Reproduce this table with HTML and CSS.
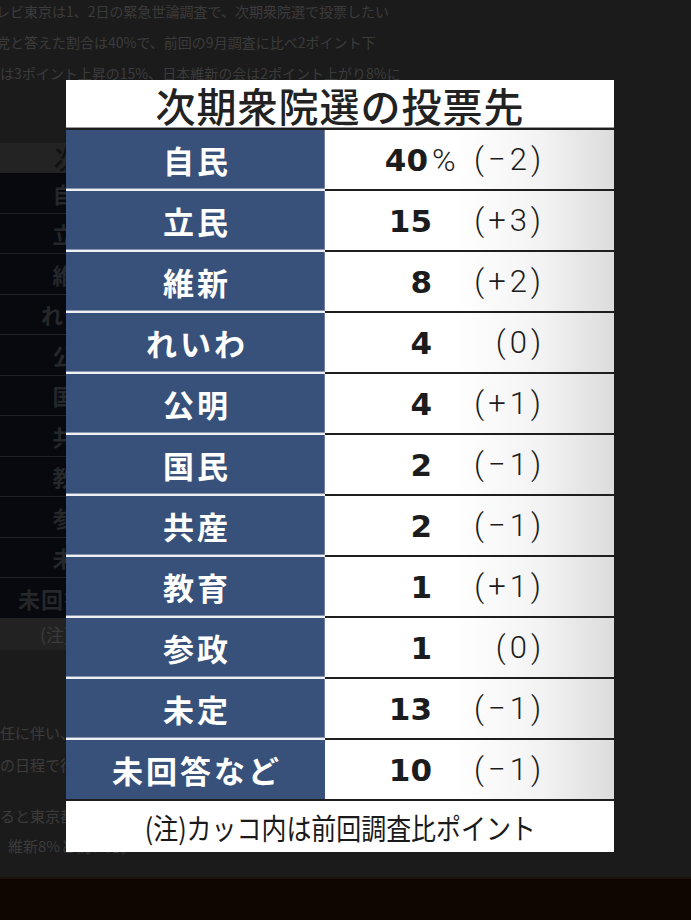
FILE: index.html
```html
<!DOCTYPE html>
<html lang="ja">
<head>
<meta charset="utf-8">
<title>次期衆院選の投票先</title>
<link rel="stylesheet" href="styles.css">
</head>
<body>
<div class="page">
  <div class="article">
    <div class="line">テレビ東京は1、2日の緊急世論調査で、次期衆院選で投票したい</div>
    <div class="line">政党と答えた割合は40%で、前回の9月調査に比べ2ポイント下</div>
    <div class="line indent">は3ポイント上昇の15%、日本維新の会は2ポイント上がり8%に</div>
  </div>

  <div class="bgtable">
    <div class="bg-head">次期衆院選の投票先</div>
    <div class="bg-row"><span>自民</span></div>
    <div class="bg-row"><span>立民</span></div>
    <div class="bg-row"><span>維新</span></div>
    <div class="bg-row"><span>れいわ</span></div>
    <div class="bg-row"><span>公明</span></div>
    <div class="bg-row"><span>国民</span></div>
    <div class="bg-row"><span>共産</span></div>
    <div class="bg-row"><span>教育</span></div>
    <div class="bg-row"><span>参政</span></div>
    <div class="bg-row"><span>未定</span></div>
    <div class="bg-row"><span>未回答など</span></div>
    <div class="bg-note">(注)カッコ内は前回調査比ポイント</div>
  </div>

  <div class="article lower">
    <div class="line">任に伴い、衆院選は10月27日投開票</div>
    <div class="line">の日程で行われる見通しだ。</div>
  </div>
  <div class="article lower2">
    <div class="line">ると東京都内の投票先は</div>
    <div class="line small-indent">維新8%と続いた。</div>
  </div>

  <div class="footer-bar"></div>
</div>

<div class="modal">
  <div class="m-title">次期衆院選の投票先</div>
  <div class="m-row"><div class="m-name">自民</div><div class="m-val"><span class="m-num">40<span class="m-pct">%</span></span><span class="m-delta">(−2)</span></div></div>
  <div class="m-row"><div class="m-name">立民</div><div class="m-val"><span class="m-num">15</span><span class="m-delta">(+3)</span></div></div>
  <div class="m-row"><div class="m-name">維新</div><div class="m-val"><span class="m-num">8</span><span class="m-delta">(+2)</span></div></div>
  <div class="m-row"><div class="m-name">れいわ</div><div class="m-val"><span class="m-num">4</span><span class="m-delta">(0)</span></div></div>
  <div class="m-row"><div class="m-name">公明</div><div class="m-val"><span class="m-num">4</span><span class="m-delta">(+1)</span></div></div>
  <div class="m-row"><div class="m-name">国民</div><div class="m-val"><span class="m-num">2</span><span class="m-delta">(−1)</span></div></div>
  <div class="m-row"><div class="m-name">共産</div><div class="m-val"><span class="m-num">2</span><span class="m-delta">(−1)</span></div></div>
  <div class="m-row"><div class="m-name">教育</div><div class="m-val"><span class="m-num">1</span><span class="m-delta">(+1)</span></div></div>
  <div class="m-row"><div class="m-name">参政</div><div class="m-val"><span class="m-num">1</span><span class="m-delta">(0)</span></div></div>
  <div class="m-row"><div class="m-name">未定</div><div class="m-val"><span class="m-num">13</span><span class="m-delta">(−1)</span></div></div>
  <div class="m-row last"><div class="m-name">未回答など</div><div class="m-val"><span class="m-num">10</span><span class="m-delta">(−1)</span></div></div>
  <div class="m-note"><span>(注)カッコ内は前回調査比ポイント</span></div>
</div>
</body>
</html>
```

FILE: styles.css
```css
html, body {
  margin: 0;
  padding: 0;
}
body {
  background: #1b1b1b;
  font-family: "Noto Sans CJK JP", "Noto Sans", sans-serif;
  overflow: hidden;
  width: 691px;
  height: 920px;
}
.page {
  height: 920px;
  display: flex;
  flex-direction: column;
  overflow: hidden;
}
.article {
  margin-left: -18px;
  margin-top: -4px;
  width: 420px;
  color: #3b3b3b;
  font-size: 14px;
  line-height: 31px;
  white-space: nowrap;
}
.article .indent {
  padding-left: 18px;
}
.article .small-indent {
  padding-left: 8px;
}

/* dimmed table behind the modal */
.bgtable {
  margin-top: 54px;
  margin-left: -10px;
  width: 362px;
  font-weight: 700;
}
.bg-head {
  height: 29px;
  background: #232323;
  color: #101010;
  font-size: 26px;
  line-height: 29px;
  text-align: center;
  font-weight: 500;
}
.bg-row {
  height: 39.5px;
  border-top: 1px solid #1f2023;
  background: #07090e;
  display: grid;
  grid-template-columns: 171px 1fr;
  align-items: center;
}
.bg-row span {
  text-align: center;
  color: #25272b;
  font-size: 22px;
  letter-spacing: 1px;
}
.bg-note {
  height: 32px;
  background: #222;
  color: #3a3a3a;
  font-size: 18px;
  font-weight: 400;
  line-height: 32px;
  padding-left: 50px;
}
.article.lower {
  margin-left: 0;
  margin-top: 67px;
  font-size: 15px;
  line-height: 32px;
}
.article.lower2 {
  margin-left: 0;
  margin-top: 20px;
  font-size: 15px;
  line-height: 30px;
}
.footer-bar {
  margin-top: auto;
  height: 41px;
  border-top: 2px solid #1e1308;
  background: #0f0600;
}

/* modal image */
.modal {
  position: absolute;
  left: 66px;
  top: 80px;
  width: 548px;
  background: #fff;
}
.m-title {
  height: 47px;
  border-bottom: 2px solid #1e1e1e;
  box-shadow: inset 0 -1px 0 #9a9a9a;
  display: flex;
  align-items: center;
  justify-content: center;
  font-size: 40px;
  font-weight: 500;
  letter-spacing: 1px;
  color: #222;
  line-height: 1;
  padding-top: 1px;
}
.m-row {
  display: grid;
  grid-template-columns: 259px 289px;
  height: 61px;
}
.m-name {
  background: #38517a;
  border-bottom: 2px solid #eef0f4;
  box-shadow: inset 0 -1px 0 #8896ad, inset -1px 0 0 #6f80a0;
  color: #fff;
  font-weight: 700;
  font-size: 31px;
  letter-spacing: 3px;
  padding-left: 3px;
  display: flex;
  align-items: center;
  justify-content: center;
}
.m-val {
  background: linear-gradient(to right, #ffffff 45%, #f3f3f3 75%, #dcdcdc 100%);
  border-bottom: 2px solid #1e1e1e;
  display: grid;
  grid-template-columns: 107px 109px;
  align-items: center;
}
.m-row.last .m-name {
  border-bottom-color: #1e1e1e;
  box-shadow: none;
}
.m-num {
  text-align: right;
  font-family: "DejaVu Sans", "Liberation Sans", sans-serif;
  font-weight: 700;
  font-size: 31px;
  color: #1c1c1c;
  white-space: nowrap;
}
.m-pct {
  display: inline-block;
  width: 0;
  overflow: visible;
  font-family: "Roboto", "Liberation Sans", sans-serif;
  font-weight: 300;
  font-size: 32px;
  padding-left: 4px;
}
.m-delta {
  text-align: right;
  font-family: "Roboto", "Liberation Sans", sans-serif;
  font-weight: 300;
  font-size: 31px;
  letter-spacing: 4px;
  margin-right: -4px;
  color: #1c1c1c;
  white-space: nowrap;
}
.m-note {
  height: 51px;
  display: flex;
  align-items: center;
  justify-content: center;
  color: #1a1a1a;
  font-size: 29px;
  white-space: nowrap;
}
.m-note span {
  display: inline-block;
  transform: scaleX(0.86);
}
```
